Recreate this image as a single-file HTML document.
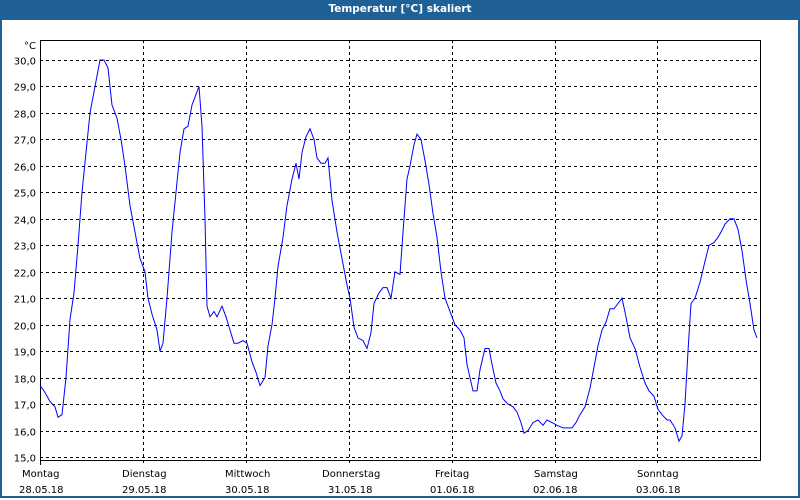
<!DOCTYPE html>
<html><head><meta charset="utf-8"><style>
html,body{margin:0;padding:0;width:800px;height:500px;overflow:hidden;background:#fff;font-family:"DejaVu Sans","Liberation Sans",sans-serif;}
#title{position:absolute;left:0;top:0;width:800px;height:20px;background:#1f6096;color:#fff;font-size:10.5px;font-weight:bold;text-align:center;line-height:19px;}
#frame{position:absolute;left:0;top:20px;width:796px;height:476px;border:2px solid #1f6096;border-top:none;}
svg{position:absolute;left:0;top:0;}
text{font-family:"DejaVu Sans","Liberation Sans",sans-serif;font-size:10px;fill:#000;}
</style></head><body>
<div id="title">Temperatur [°C] skaliert</div>
<div id="frame"></div>
<svg id="s" width="800" height="500" xmlns="http://www.w3.org/2000/svg"></svg>
<script>
var s=document.getElementById('s'),ns='http://www.w3.org/2000/svg',h='';
function Y(t){return 60+(30-t)*26.47;}
for(var t=15;t<=30;t++){var y=Math.round(Y(t))+0.5;h+='<line x1="40" x2="760" y1="'+y+'" y2="'+y+'" stroke="#000" stroke-dasharray="3,3"/>';
h+='<text x="36" y="'+(y+4)+'" text-anchor="end">'+t+',0</text>';}
var xs=[143,246,349,452,555,657];
for(var i=0;i<xs.length;i++){h+='<line x1="'+(xs[i]+.5)+'" x2="'+(xs[i]+.5)+'" y1="40" y2="465" stroke="#000" stroke-dasharray="3,3"/>';}
h+='<line x1="40.5" x2="40.5" y1="40" y2="465" stroke="#000"/>';
h+='<polyline points="40.5,40.5 760.5,40.5 760.5,460.5 40.5,460.5" fill="none" stroke="#000"/>';
h+='<text x="36" y="49" text-anchor="end">°C</text>';
var days=['Montag','Dienstag','Mittwoch','Donnerstag','Freitag','Samstag','Sonntag'],dates=['28.05.18','29.05.18','30.05.18','31.05.18','01.06.18','02.06.18','03.06.18'];
var lx=[22,122,225,322,435,534,637],dx=[19,122,225,328,430,533,636];
for(i=0;i<7;i++){h+='<text x="'+lx[i]+'" y="477">'+days[i]+'</text><text x="'+dx[i]+'" y="493">'+dates[i]+'</text>';}
var p=[40,17.7,44,17.5,50,17.1,55,16.9,58,16.5,62,16.6,66,18,70,20.2,74,21.2,78,23,82,25,86,26.5,90,28,95,29,100,30,104,30,108,29.7,112,28.3,117,27.8,121,27,125,26,130,24.5,135,23.5,140,22.5,145,22,148,21,152,20.4,157,19.8,160,19,163,19.3,167,21,172,23.5,176,25,180,26.5,184,27.4,188,27.5,192,28.3,196,28.7,199,29,202,27.5,205,24,207,20.7,210,20.3,214,20.5,217,20.3,222,20.7,226,20.3,230,19.8,234,19.3,238,19.3,243,19.4,247,19.3,252,18.6,256,18.2,260,17.7,265,18,268,19.2,272,20,275,21,278,22.2,283,23.3,287,24.5,292,25.5,296,26.1,299,25.5,302,26.5,306,27.1,310,27.4,314,27,317,26.3,321,26.1,325,26.1,328,26.3,332,24.7,337,23.5,342,22.5,347,21.5,350,21,354,19.9,358,19.5,363,19.4,367,19.1,371,19.7,374,20.8,379,21.2,383,21.4,387,21.4,391,21,395,22,400,21.9,403,23.5,407,25.5,410,26,414,26.8,417,27.2,421,27,425,26.2,429,25.3,433,24.2,437,23.3,441,22,445,21,450,20.5,455,20,460,19.8,464,19.5,467,18.5,473,17.5,477,17.5,480,18.3,485,19.1,489,19.1,492,18.5,496,17.8,500,17.5,503,17.2,508,17,513,16.9,517,16.7,521,16.3,524,15.9,528,16,533,16.3,538,16.4,543,16.2,547,16.4,552,16.3,557,16.2,563,16.1,567,16.1,572,16.1,576,16.3,580,16.6,585,16.9,590,17.6,594,18.4,598,19.2,602,19.8,606,20.1,610,20.6,614,20.6,618,20.8,622,21,626,20.3,630,19.5,635,19.1,640,18.4,645,17.8,649,17.5,654,17.3,658,16.8,662,16.6,667,16.4,670,16.4,675,16.1,679,15.6,682,15.8,685,17,688,19,691,20.8,695,21,700,21.6,705,22.4,709,23,714,23.1,718,23.3,721,23.5,725,23.8,730,24,734,24,738,23.6,742,22.8,746,21.7,750,20.8,754,19.8,757,19.5];
var pts=[];for(i=0;i<p.length;i+=2)pts.push(p[i]+','+Y(p[i+1]).toFixed(1));
h+='<polyline points="'+pts.join(' ')+'" fill="none" stroke="#0000ff" stroke-width="1"/>';
s.innerHTML=h;
</script>
</body></html>
